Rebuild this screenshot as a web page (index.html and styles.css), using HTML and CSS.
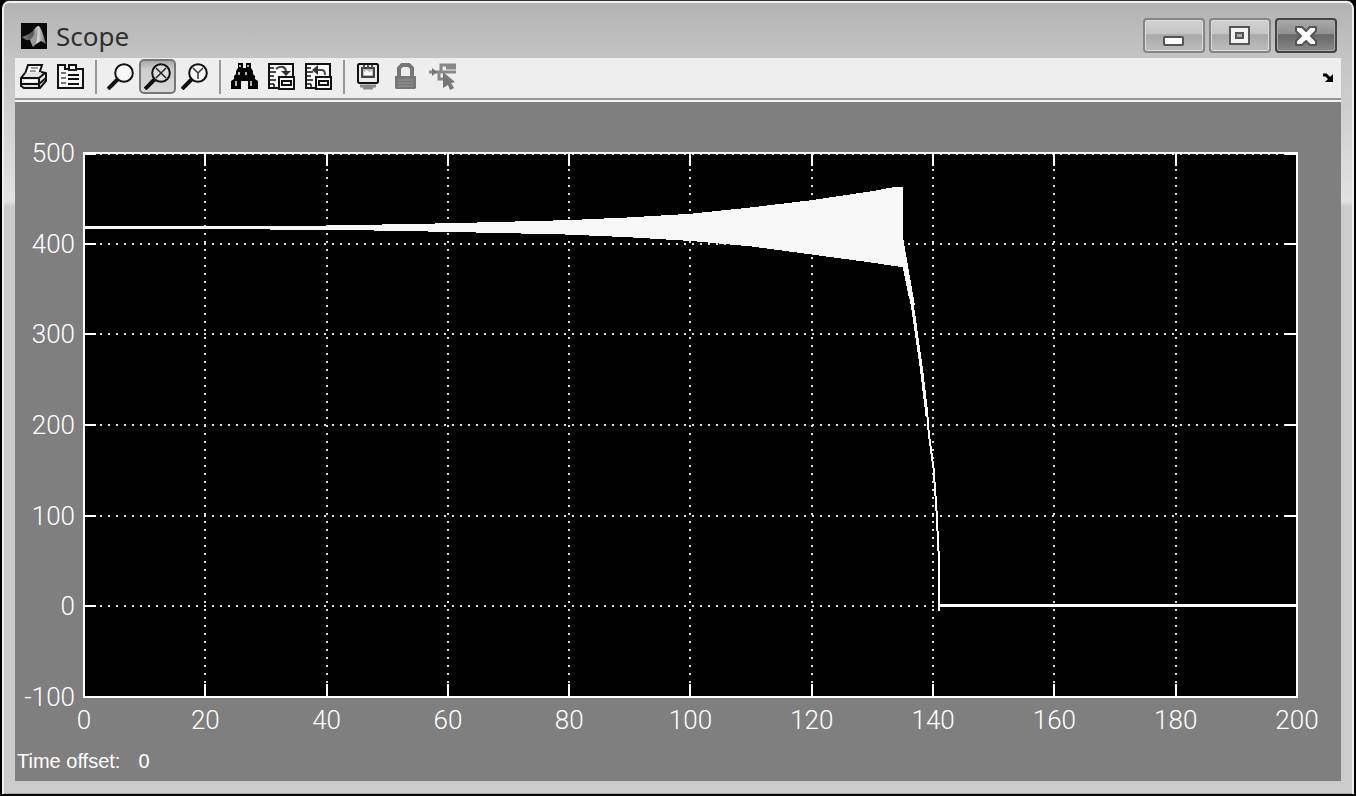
FILE: index.html
```
<!DOCTYPE html>
<html lang="en">
<head>
<meta charset="utf-8">
<title>Scope</title>
<link rel="stylesheet" href="styles.css">
</head>
<body>
<main class="window">
  <header class="titlebar">
    <svg class="logo" viewBox="0 0 26 26" aria-hidden="true">
      <defs><linearGradient id="peak" x1="0" y1="0" x2="1" y2="0"><stop offset="0" stop-color="#777"/><stop offset=".45" stop-color="#555"/><stop offset=".65" stop-color="#ddd"/><stop offset="1" stop-color="#666"/></linearGradient></defs>
      <rect width="26" height="26" fill="#080808"/>
      <path d="M1 14L8 11L12 8Q15 3 18 3Q21 6 25 21L20 18Q16 20 12 24L9 17L5 17Z" fill="url(#peak)"/>
      <path d="M12 24L9 17L14 11L17 4L16 17Z" fill="#999"/>
    </svg>
    <h1 class="title">Scope</h1>
    <div class="controls">
      <button class="control" aria-label="Minimize"><svg viewBox="0 0 24 22"><rect x="2" y="12" width="19" height="8" rx="1" fill="#fff" stroke="#555" stroke-width="2"/></svg></button>
      <button class="control" aria-label="Maximize"><svg viewBox="0 0 24 22"><path fill="#f4f4f4" stroke="#555" stroke-width="2" d="M2 2H21V19H2Z"/><path fill="#aaa" stroke="#555" stroke-width="2" d="M8 8H15V13H8Z"/></svg></button>
      <button class="control control-close" aria-label="Close"><svg viewBox="0 0 24 22"><path fill="#fff" stroke="#555" stroke-width="2" stroke-linejoin="round" d="M2 2H8L12 6L16 2H22V6L17 11L22 16V20H16L12 16L8 20H2V16L7 11L2 6Z"/></svg></button>
    </div>
  </header>

  <nav class="toolbar" aria-label="Scope tools">
    <button class="tool" aria-label="Print"><svg viewBox="0 0 27 27">
      <path d="M8 2H22L19 11H5Z" fill="#fff" stroke="#111" stroke-width="2"/>
      <path d="M11 5H18M10 8H16" stroke="#333" stroke-width="1"/>
      <path d="M5 10L1 15V23L4 25H20L26 18V10L21 9" fill="#e4e4e4" stroke="#111" stroke-width="2"/>
      <path d="M2 15H19L25 10M19 15V25M2 21H19L26 15" fill="none" stroke="#111" stroke-width="2"/>
      <path d="M4 18H17" stroke="#fff" stroke-width="2"/>
    </svg></button>
    <button class="tool" aria-label="Parameters"><svg viewBox="0 0 27 27">
      <path d="M1 25V2H8V6H12V2H19V6H26V25Z" fill="#f8f8f8" stroke="#111" stroke-width="2"/>
      <path d="M11 7H20" stroke="#222" stroke-width="2"/><path d="M4 10H9M4 15H9M4 20H9" stroke="#777" stroke-width="2"/>
      <path d="M11 12H22M11 16H22M11 21H22" stroke="#111" stroke-width="2"/>
    </svg></button>
    <span class="separator"></span>
    <button class="tool" aria-label="Zoom"><svg viewBox="0 0 27 27">
      <circle cx="17" cy="10" r="8.8" fill="#f8f8f8" stroke="#111" stroke-width="2"/><path d="M11 16L1 26" stroke="#111" stroke-width="4"/>
    </svg></button>
    <button class="tool tool-pressed" aria-label="Zoom X-axis" aria-pressed="true"><svg viewBox="0 0 27 27">
      <circle cx="17" cy="10" r="8.8" fill="#ddd" stroke="#111" stroke-width="2"/><path d="M11 16L1 26" stroke="#111" stroke-width="4"/><path d="M12 5L22 15M22 5L12 15" stroke="#222" stroke-width="1.5"/>
    </svg></button>
    <button class="tool" aria-label="Zoom Y-axis"><svg viewBox="0 0 27 27">
      <circle cx="17" cy="10" r="8.8" fill="#f8f8f8" stroke="#111" stroke-width="2"/><path d="M11 16L1 26" stroke="#111" stroke-width="4"/><path d="M12 5L17 10L22 5M17 10V16" fill="none" stroke="#333" stroke-width="1.5"/>
    </svg></button>
    <span class="separator"></span>
    <button class="tool" aria-label="Autoscale"><svg viewBox="0 0 27 27">
      <path fill="#000" d="M7 0H12V5H15V0H20V5L22 8V11L24 13V16L27 18V26H17V18H10V26H0V18L3 16V13L5 11V8L7 5Z"/>
      <path d="M9 2V4M17 2V4M8 9V12M15 9V12M5 18V23M20 18V23" stroke="#eee" stroke-width="1.5"/>
    </svg></button>
    <button class="tool" aria-label="Save axes settings"><svg viewBox="0 0 27 27">
      <path d="M10 25H1V1H25V13" fill="#fafafa" stroke="#111" stroke-width="2"/><path d="M2 5H6M2 9H8M2 13H6M2 17H8M2 21H6M6 21V25" stroke="#111" stroke-width="1.5"/>
      <path d="M8 6Q11 3 15 4Q18 5 18 9" fill="none" stroke="#444" stroke-width="2"/><path d="M13 8H23L18 13Z" fill="#333"/>
      <path d="M11 14H26V26H11Z" fill="#fff" stroke="#111" stroke-width="2"/><path d="M14 18H23V22H14Z" fill="#fff" stroke="#111" stroke-width="2"/>
    </svg></button>
    <button class="tool" aria-label="Restore axes settings"><svg viewBox="0 0 27 27">
      <path d="M10 25H1V1H25V13" fill="#fafafa" stroke="#111" stroke-width="2"/><path d="M2 5H6M2 9H8M2 13H6M2 17H8M2 21H6M6 21V25" stroke="#111" stroke-width="1.5"/>
      <path d="M10 7H17Q20 7 20 12" fill="none" stroke="#444" stroke-width="2"/><path d="M13 2V12L7 7Z" fill="#333"/>
      <path d="M11 14H26V26H11Z" fill="#fff" stroke="#111" stroke-width="2"/><path d="M14 18H23V22H14Z" fill="#fff" stroke="#111" stroke-width="2"/>
    </svg></button>
    <span class="separator"></span>
    <button class="tool" aria-label="Floating scope"><svg viewBox="0 0 27 27">
      <path d="M4 1H22L23 2V19L22 20H4L3 19V2Z" fill="#eee" stroke="#111" stroke-width="2"/>
      <path d="M7 5H19V14H7Z" fill="#bbb" stroke="#444" stroke-width="2"/><path d="M9 12V9L12 7L14 9L17 8V12Z" fill="#f8f8f8"/><path d="M9 2V4M13 2V4M17 2V4" stroke="#555" stroke-width="2"/>
      <path d="M4 20H22" stroke="#111" stroke-width="2"/><path d="M5 23H21M8 25H18" stroke="#888" stroke-width="3"/>
    </svg></button>
    <button class="tool" aria-label="Lock axes selection" disabled><svg viewBox="0 0 27 27">
      <path d="M7 13V5L10 2H17L20 5V13" fill="none" stroke="#777" stroke-width="4"/><path d="M3 13H24V25L23 26H4L3 25Z" fill="#777"/><path d="M6 17H21M6 20H21M6 23H21" stroke="#999" stroke-width="1"/>
    </svg></button>
    <button class="tool" aria-label="Signal selection" disabled><svg viewBox="0 0 27 27">
      <path d="M27 2H12V9M0 9H27M27 5H17M10 9V16H15" fill="none" stroke="#888" stroke-width="3"/><path d="M3 5L8 9L3 13Z" fill="#777"/><path d="M14 9L26 19L22 20L25 25L21 27L19 22L14 25Z" fill="#777"/>
    </svg></button>
    <button class="dock" aria-label="Dock window"><svg viewBox="0 0 12 10"><path d="M1 2H4L8 6" fill="none" stroke="#000" stroke-width="3"/><path d="M11 1V9H3Z" fill="#000"/></svg></button>
  </nav>

  <section class="scope">
    <div class="y-axis">
      <span>500</span><span>400</span><span>300</span><span>200</span><span>100</span><span>0</span><span>-100</span>
    </div>
    <div class="plot">
      <svg class="chart" viewBox="0 0 200 600" preserveAspectRatio="none" role="img" aria-label="Signal against time">
        <rect width="200" height="600" fill="#000"/>
        <path class="grid" d="M0 1H200M0 100H200M0 200H200M0 300H200M0 400H200M0 500H200"/>
        <path class="grid" d="M20 0V600M40 0V600M60 0V600M80 0V600M100 0V600M120 0V600M140 0V600M160 0V600M180 0V600"/>
        <path class="ticks" d="M0 1H2M198 1H200M0 100H2M0 200H2M0 300H2M0 400H2M0 500H2M198 100H200M198 200H200M198 300H200M198 400H200M198 500H200"/>
        <path class="ticks" d="M20 0V14M40 0V14M60 0V14M80 0V14M100 0V14M120 0V14M140 0V14M160 0V14M180 0V14M20 586V600M40 586V600M60 586V600M80 586V600M100 586V600M120 586V600M140 586V600M160 586V600M180 586V600"/>
        <path class="envelope" d="M0 80.5L40 80L60 77.5L80 74L90 71L100 67L110 60L120 52L130 42L134 37H135V91L136 130L137 168L136 160L135 126L130 121L120 112L110 103L100 97L90 93L80 90L60 87L40 84.5L0 84Z"/>
        <path class="trace trace-wide" d="M135.3 120L136 145L136.8 178L138.1 239L139 290"/>
        <path class="trace" d="M139 285L139.3 310L140.1 349L140.6 399L140.9 440L141 505"/>
        <path class="trace trace-wide" d="M140.8 499.5H200"/>
        <path class="frame" d="M0 0H200V600H0Z"/>
      </svg>
    </div>
    <div class="x-axis">
      <span>0</span><span>20</span><span>40</span><span>60</span><span>80</span><span>100</span><span>120</span><span>140</span><span>160</span><span>180</span><span>200</span>
    </div>
    <footer class="status"><span>Time offset:</span><span>0</span></footer>
  </section>
</main>
</body>
</html>
```
FILE: styles.css
```
* { box-sizing: border-box; }

body {
  margin: 0;
  background: #000;
}

button {
  padding: 0;
  border: 0;
  background: none;
}

.window {
  display: flex;
  flex-direction: column;
  height: 100vh;
  padding: 0 13px 13px;
  border: 2px solid #000;
  border-top: 1px solid #333;
  border-radius: 9px 9px 0 0;
  background: linear-gradient(#b2b2b2, #c4c4c4 56px, #e2e2e2 200px, #cbcbcb 206px);
  box-shadow: inset 0 2px 0 #f4f4f4, inset 2px 0 0 #eee, inset -2px 0 0 #eee, inset 0 -1px 0 #aaa;
}

.titlebar {
  display: flex;
  align-items: center;
  flex: none;
  height: 57px;
  padding: 12px 4px 0 6px;
}

.logo {
  width: 26px;
  height: 26px;
}

.title {
  margin: 0 0 0 9px;
  color: #303030;
  font: 400 26px/30px "Noto Sans", sans-serif;
}

.controls {
  display: flex;
  gap: 4px;
  margin-left: auto;
}

.control {
  display: grid;
  place-items: center;
  width: 62px;
  height: 35px;
  border: 2px solid #858585;
  border-radius: 4px;
  background: linear-gradient(#d2d2d2, #c4c4c4 46%, #a9a9a9 47%, #bdbdbd);
  box-shadow: inset 0 0 0 1px #ddd;
}

.control svg {
  width: 24px;
  height: 22px;
}

.control-close {
  border-color: #444;
  background: linear-gradient(#a8a8a8, #909090 46%, #666 47%, #8a8a8a);
  box-shadow: inset 0 0 0 1px #aaa;
}

.toolbar {
  display: flex;
  align-items: flex-start;
  flex: none;
  height: 44px;
  padding-top: 1px;
  border-bottom: 2px solid #f2f2f2;
  background: linear-gradient(#eee 40px, #969696 40px);
}

.tool {
  display: grid;
  place-items: center;
  width: 37px;
  height: 35px;
  border-radius: 5px;
}

.tool svg {
  width: 27px;
  height: 27px;
}

.tool-pressed {
  border: 2px solid #777;
  background: linear-gradient(#aaa, #ccc 8px, #d8d8d8);
}

.separator {
  width: 2px;
  height: 34px;
  margin: 1px 5px 0 6px;
  background: #999;
}

.dock {
  margin: 14px 7px 0 auto;
  line-height: 0;
}

.dock svg {
  width: 12px;
  height: 10px;
}

.scope {
  display: grid;
  flex: 1;
  grid-template: "y plot" minmax(0, 1fr) "x x" 45px "status status" 39px / 69px minmax(0, 1fr);
  min-height: 0;
  padding: 51px 44px 0 0;
  background: #7f7f7f;
  color: #fff;
  font: 300 26px/26px Roboto, "Liberation Sans", sans-serif;
}

.y-axis {
  display: flex;
  grid-area: y;
  flex-direction: column;
  justify-content: space-between;
  padding-right: 9px;
  text-align: right;
}

.y-axis span {
  height: 0;
  line-height: 0;
}

.plot {
  grid-area: plot;
  min-height: 0;
}

.chart {
  display: block;
  overflow: visible;
  width: 100%;
  height: 100%;
}

.chart path {
  fill: none;
  stroke: #fff;
  stroke-width: 2px;
  vector-effect: non-scaling-stroke;
  shape-rendering: crispEdges;
}

.chart .grid {
  stroke: #ddd;
  stroke-dasharray: 2 6;
}

.chart .envelope {
  fill: #f8f8f8;
  stroke: none;
}

.chart .trace-wide {
  stroke-width: 3px;
}

.x-axis {
  display: flex;
  grid-area: x;
  justify-content: space-between;
  padding: 10px 0 0 69px;
}

.x-axis span {
  display: flex;
  justify-content: center;
  width: 0;
}

.status {
  display: flex;
  grid-area: status;
  gap: 18px;
  padding: 6px 0 0 2px;
  font: 400 20px/26px "Liberation Sans", sans-serif;
}
```
